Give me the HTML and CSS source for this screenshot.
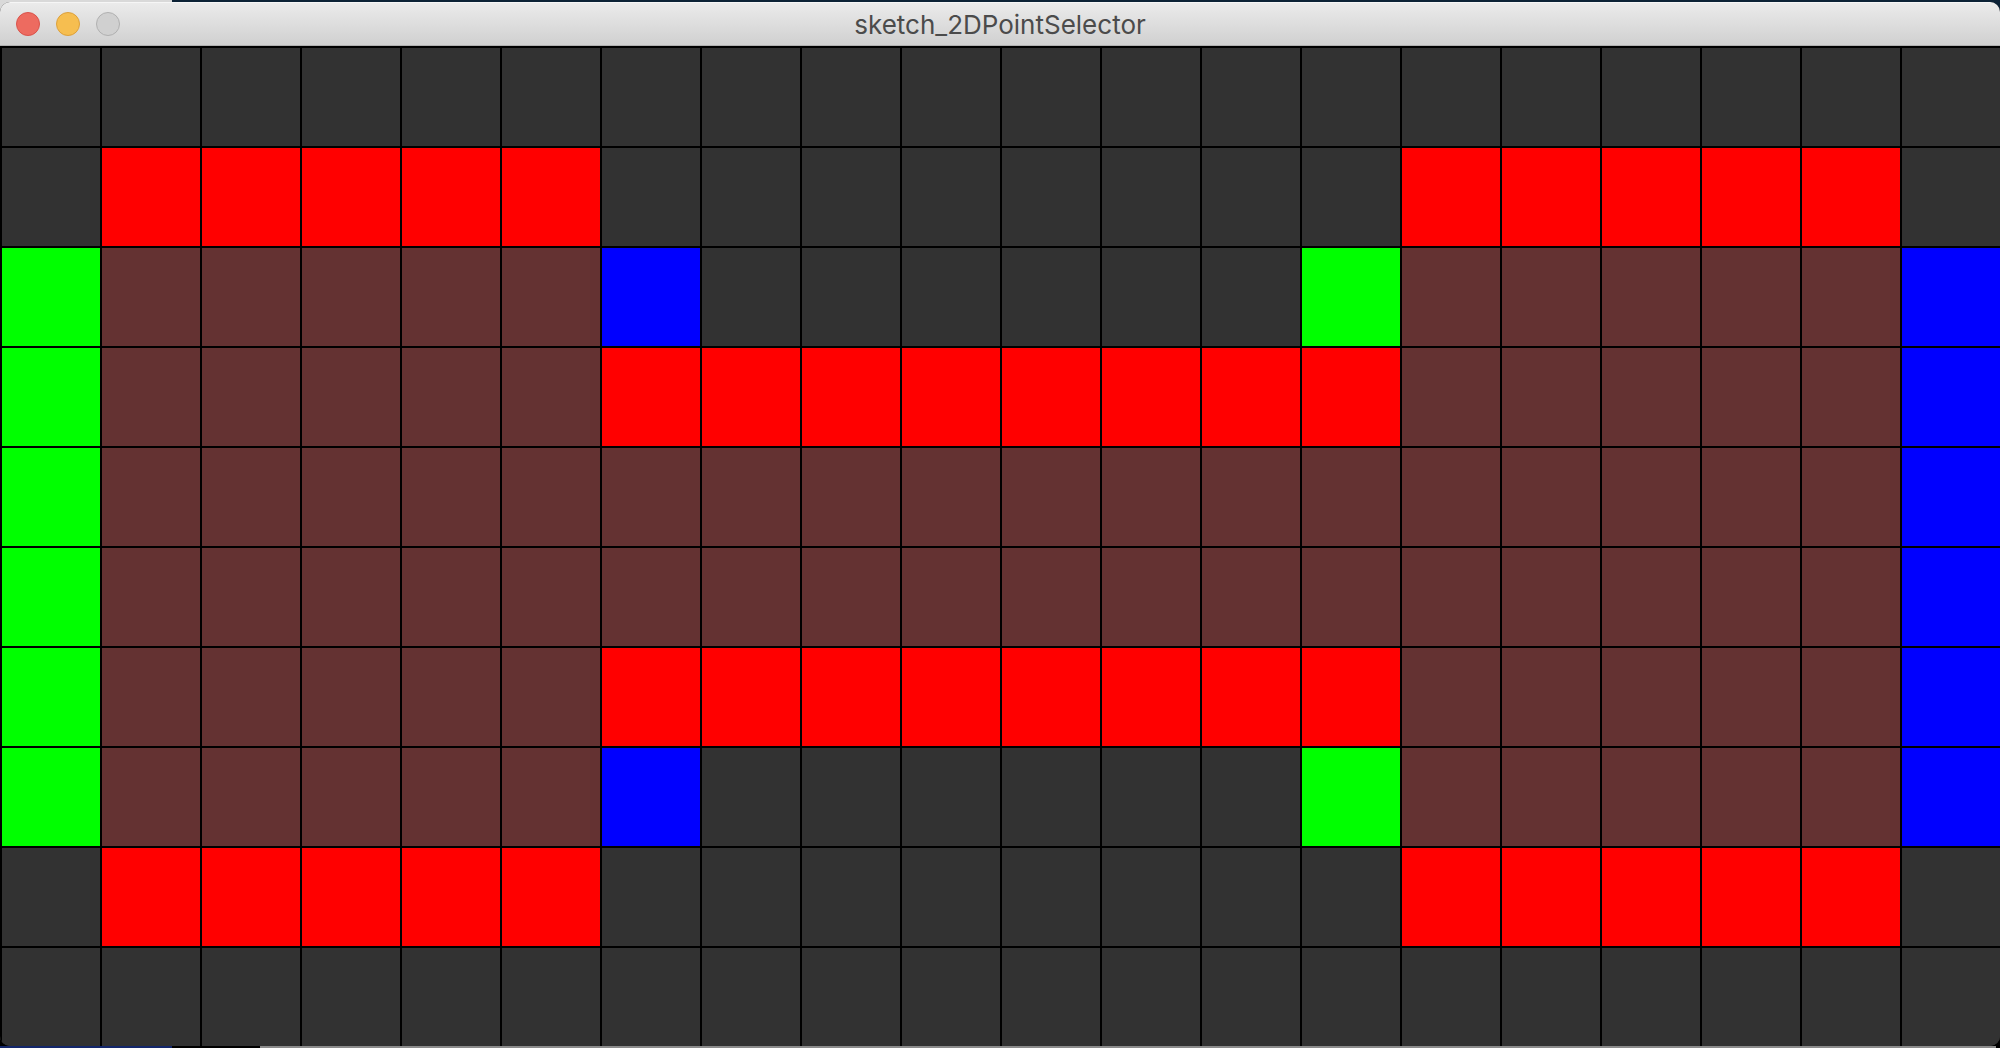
FILE: index.html
```html
<!DOCTYPE html>
<html lang="en">
<head>
<meta charset="utf-8">
<title>sketch_2DPointSelector</title>
<link rel="stylesheet" href="styles.css">
</head>
<body>
<main class="window">
  <header class="titlebar">
    <div class="controls">
      <button class="control close" type="button" aria-label="Close"></button>
      <button class="control minimize" type="button" aria-label="Minimize"></button>
      <button class="control zoom" type="button" aria-label="Zoom" disabled></button>
    </div>
    <h1 class="title">sketch_2DPointSelector</h1>
  </header>
  <div class="board" id="board"></div>
</main>
<script src="board.js"></script>
</body>
</html>
```
FILE: styles.css
```css
* {
  box-sizing: border-box;
}

body {
  margin: 0;
  padding: 2px 0;
  background:
    linear-gradient(to right, #d9d9d9 172px, #0c2236 172px) top / 100% 24px no-repeat,
    linear-gradient(to right, #14276b 172px, #000 172px 260px, #8c8c8c 260px calc(100% - 4px), #000 0) bottom / 100% 2px no-repeat,
    #000;
}

.window {
  overflow: hidden;
  border-radius: 10px;
  background: #323232;
}

.titlebar {
  display: grid;
  grid-template-columns: 1fr auto 1fr;
  align-items: center;
  height: 44px;
  padding: 0 16px;
  border-top: 1px solid #f6f6f6;
  border-bottom: 1px solid #b0b0b0;
  background: linear-gradient(#ebebeb, #d0d0d0);
}

.controls {
  display: flex;
  gap: 16px;
}

.control {
  width: 24px;
  height: 24px;
  padding: 0;
  border: 1px solid;
  border-radius: 50%;
}

.close {
  border-color: #d9534b;
  background: #ed6b60;
}

.minimize {
  border-color: #dca03c;
  background: #f6be50;
}

.zoom {
  border-color: #b0b0b0;
  background: #d0d0d0;
}

.title {
  margin: 0;
  padding-top: 2px;
  color: #4b4b4b;
  font: 400 26px/40px Inter, "Liberation Sans", sans-serif;
}

.board {
  display: grid;
  grid-template-columns: repeat(20, 1fr);
}

.cell {
  aspect-ratio: 1;
  border: solid #000;
  border-width: 2px 0 0 2px;
  background: #323232;
}

.edge {
  background: #f00;
}

.inside {
  background: #643232;
}

.start {
  background: #0f0;
}

.end {
  background: #00f;
}
```
FILE: board.js
```js
// r: horizontal edge, m: interior, g: left side, b: right side, dot: empty
const rows = [
  "....................",
  ".rrrrr........rrrrr.",
  "gmmmmmb......gmmmmmb",
  "gmmmmmrrrrrrrrmmmmmb",
  "gmmmmmmmmmmmmmmmmmmb",
  "gmmmmmmmmmmmmmmmmmmb",
  "gmmmmmrrrrrrrrmmmmmb",
  "gmmmmmb......gmmmmmb",
  ".rrrrr........rrrrr.",
  "...................."
];
const kinds = { r: "edge", m: "inside", g: "start", b: "end" };
const board = document.getElementById("board");

for (const mark of rows.join("")) {
  const cell = document.createElement("div");
  cell.className = "cell";
  if (kinds[mark]) cell.classList.add(kinds[mark]);
  board.append(cell);
}
```
